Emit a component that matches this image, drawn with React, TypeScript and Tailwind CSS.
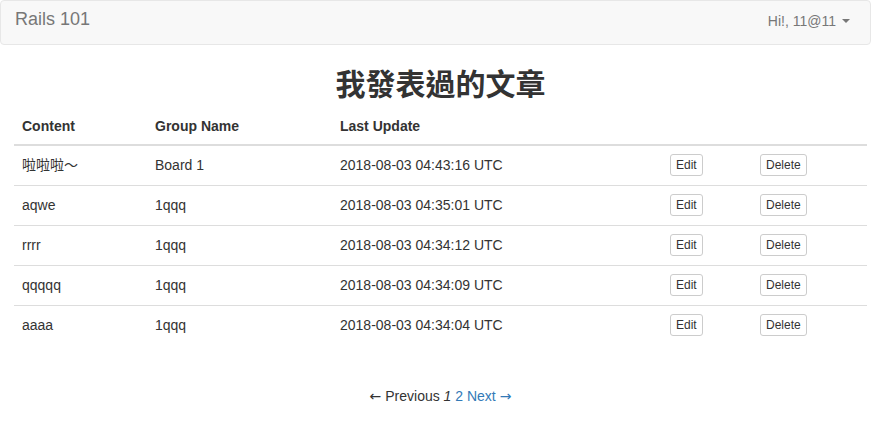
import React from 'react';

const posts = [
  { content: '啦啦啦～', group: 'Board 1', updated: '2018-08-03 04:43:16 UTC' },
  { content: 'aqwe', group: '1qqq', updated: '2018-08-03 04:35:01 UTC' },
  { content: 'rrrr', group: '1qqq', updated: '2018-08-03 04:34:12 UTC' },
  { content: 'qqqqq', group: '1qqq', updated: '2018-08-03 04:34:09 UTC' },
  { content: 'aaaa', group: '1qqq', updated: '2018-08-03 04:34:04 UTC' },
];

const font = { fontFamily: '"Liberation Sans", Arial, "Noto Sans CJK TC", sans-serif' };
const arrowFont = { fontFamily: '"DejaVu Sans", sans-serif' };

const XsButton: React.FC<{ label: string }> = ({ label }) => (
  <button className="h-[22px] px-[5px] text-[12px] leading-[18px] text-[#333] bg-white border border-[#ccc] rounded-[3px]">
    {label}
  </button>
);

export default function App() {
  return (
    <div className="min-h-[421px] bg-white text-[14px] text-[#333]" style={font}>
      {/* Navbar */}
      <div className="h-[45px] bg-[#f8f8f8] border border-[#e7e7e7] rounded-[4px] flex items-start justify-between">
        <span className="pl-[14px] pt-[8px] text-[18px] leading-[20px] text-[#777]">Rails 101</span>
        <span className="pr-[20px] pt-[10px] text-[14px] leading-[20px] text-[#777] flex items-center">
          Hi!, 11@11
          <span className="ml-[6px] w-0 h-0 border-l-[4px] border-r-[4px] border-t-[4px] border-l-transparent border-r-transparent border-t-[#777]" />
        </span>
      </div>

      <div className="pl-[14px] pr-[4px]">
        <h2
          className="mt-[21px] mb-[9px] text-center text-[30px] leading-[33px] font-bold text-[#333]"
          style={{ fontFamily: '"Noto Sans CJK TC", "Liberation Sans", sans-serif' }}
        >
          我發表過的文章
        </h2>

        <table className="w-full border-collapse mb-[20px]">
          <colgroup>
            <col className="w-[133px]" />
            <col className="w-[185px]" />
            <col className="w-[330px]" />
            <col className="w-[90px]" />
            <col />
          </colgroup>
          <thead>
            <tr>
              <th className="text-left font-bold p-[8px] leading-[20px] border-b-2 border-[#ddd]">Content</th>
              <th className="text-left font-bold p-[8px] leading-[20px] border-b-2 border-[#ddd]">Group Name</th>
              <th className="text-left font-bold p-[8px] leading-[20px] border-b-2 border-[#ddd]">Last Update</th>
              <th className="p-[8px] border-b-2 border-[#ddd]" />
              <th className="p-[8px] border-b-2 border-[#ddd]" />
            </tr>
          </thead>
          <tbody>
            {posts.map((p, i) => (
              <tr key={i} className={i > 0 ? 'border-t border-[#ddd]' : ''}>
                <td className="h-[40px] px-[8px] py-0 leading-[20px] align-middle">{p.content}</td>
                <td className="h-[40px] px-[8px] py-0 leading-[20px] align-middle">{p.group}</td>
                <td className="h-[40px] px-[8px] py-0 leading-[20px] align-middle">{p.updated}</td>
                <td className="h-[40px] px-[8px] py-0 align-middle">
                  <XsButton label="Edit" />
                </td>
                <td className="h-[40px] px-[8px] py-0 align-middle">
                  <XsButton label="Delete" />
                </td>
              </tr>
            ))}
          </tbody>
        </table>

        {/* Pagination */}
        <div className="mt-[41px] text-center leading-[20px]">
          <span className="text-[#333]">
            <span style={arrowFont}>←</span> Previous
          </span>{' '}
          <em className="text-[#333]">1</em>{' '}
          <span className="text-[#337ab7]">2</span>{' '}
          <span className="text-[#337ab7]">
            Next <span style={arrowFont}>→</span>
          </span>
        </div>
      </div>
    </div>
  );
}
